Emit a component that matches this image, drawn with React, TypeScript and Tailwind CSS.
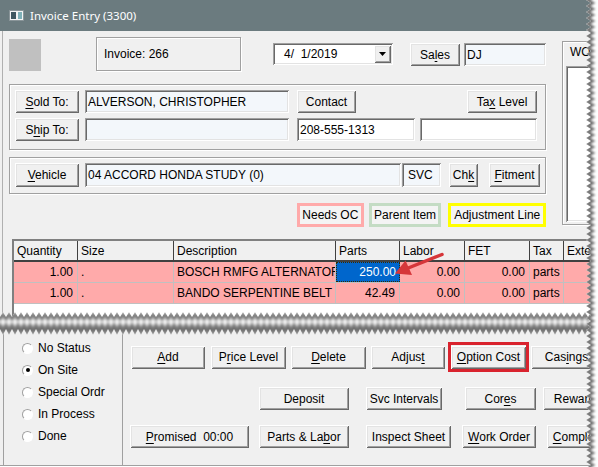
import React from "react";

const RAISED =
  "bg-[#f0f0f0] shadow-[inset_1px_1px_0_#ffffff,inset_-1px_-1px_0_#696969,inset_2px_2px_0_#e3e3e3,inset_-2px_-2px_0_#a0a0a0]";
const SUNKEN =
  "shadow-[inset_1px_1px_0_#a0a0a0,inset_-1px_-1px_0_#ffffff,inset_2px_2px_0_#696969,inset_-2px_-2px_0_#e3e3e3]";
const ETCHED = "border border-[#a0a0a0] shadow-[1px_1px_0_#ffffff,inset_1px_1px_0_#ffffff]";

function U({ c }: { c: string }) {
  return <span className="underline underline-offset-2 decoration-1">{c}</span>;
}

function Btn({ className = "", children }: { className?: string; children: React.ReactNode }) {
  return (
    <div className={`${RAISED} shrink-0 flex items-center justify-center whitespace-nowrap ${className}`}>
      <span className="whitespace-pre">{children}</span>
    </div>
  );
}

function Field({ className = "", children }: { className?: string; children?: React.ReactNode }) {
  return (
    <div className={`${SUNKEN} shrink-0 flex items-center whitespace-nowrap overflow-hidden ${className}`}>
      {children}
    </div>
  );
}

function Radio({ label, checked }: { label: string; checked?: boolean }) {
  return (
    <div className="flex items-center h-[22px]">
      <span className="w-[11px] h-[11px] rounded-full bg-white border border-t-[#a0a0a0] border-l-[#a0a0a0] border-b-[#ffffff] border-r-[#ffffff] flex items-center justify-center">
        {checked && <span className="w-[4px] h-[4px] rounded-full bg-black" />}
      </span>
      <span className="ml-[5px]">{label}</span>
    </div>
  );
}

const COLS = "grid grid-cols-[64px_96px_162px_64px_65px_65px_34px_60px]";

type Line = { qty: string; size: string; desc: string; parts: string; labor: string; fet: string; tax: string };

const LINES: Line[] = [
  { qty: "1.00", size: ".", desc: "BOSCH RMFG ALTERNATOR", parts: "250.00", labor: "0.00", fet: "0.00", tax: "parts" },
  { qty: "1.00", size: ".", desc: "BANDO SERPENTINE BELT", parts: "42.49", labor: "0.00", fet: "0.00", tax: "parts" },
];

function Grid() {
  const head = ["Quantity", "Size", "Description", "Parts", "Labor", "FET", "Tax", "Extended"];
  const cell = "h-[21px] flex items-center border-r border-b border-[#c0c0c0] bg-[#ffaaaa] overflow-hidden whitespace-nowrap";
  return (
    <div className="ml-[12px] mt-[12px] w-[600px] flex-1 bg-white border-t-2 border-l-2 border-[#808080]">
      <div className={`${COLS} h-[21px] border-b-2 border-[#404040] bg-[#f0f0f0]`}>
        {head.map((h) => (
          <div key={h} className="flex items-center pl-[3px] border-r border-[#404040] overflow-hidden whitespace-nowrap">
            {h}
          </div>
        ))}
      </div>
      {LINES.map((l, i) => (
        <div key={i} className={COLS}>
          <div className={`${cell} justify-end pr-[4px]`}>{l.qty}</div>
          <div className={`${cell} pl-[3px]`}>{l.size}</div>
          <div className={`${cell} pl-[3px]`}>{l.desc}</div>
          {i === 0 ? (
            <div className="h-[21px] flex items-center justify-end border-b border-[#c0c0c0] bg-[#ffaaaa]">
              <div className="w-full h-full flex items-center justify-end pr-[3px] bg-[#0066cc] text-white border border-dotted border-[#3a2a00]">
                {l.parts}
              </div>
            </div>
          ) : (
            <div className={`${cell} justify-end pr-[4px]`}>{l.parts}</div>
          )}
          <div className={`${cell} justify-end pr-[4px]`}>{l.labor}</div>
          <div className={`${cell} justify-end pr-[4px]`}>{l.fet}</div>
          <div className={`${cell} pl-[3px]`}>{l.tax}</div>
          <div className={cell} />
        </div>
      ))}
    </div>
  );
}

function zig(from: number, to: number, a: number, b: number, horizontal: boolean) {
  const pts: string[] = [];
  for (let i = 0, v = from; v <= to; i++, v += 3) {
    const w = i % 2 ? a : b;
    pts.push(horizontal ? `${v},${w}` : `${w},${v}`);
  }
  return pts;
}

function Tear() {
  const top = zig(-6, 606, 6, 11, true);
  const bot = zig(-6, 606, 29, 23, true);
  const band = [...top, ...[...bot].reverse()].join(" ");
  return (
    <svg className="absolute left-0 top-[306px] pointer-events-none" width="598" height="34" viewBox="0 0 598 34">
      <defs>
        <clipPath id="bandClip">
          <polygon points={band} />
        </clipPath>
        <filter id="bandBlur" x="-5%" y="-100%" width="110%" height="300%">
          <feGaussianBlur stdDeviation="1.6" />
        </filter>
      </defs>
      <polygon points={band} fill="#ffffff" />
      <g clipPath="url(#bandClip)">
        <polyline points={top.join(" ")} transform="translate(0,2)" fill="none" stroke="#6e6e6e" strokeWidth="3" filter="url(#bandBlur)" />
        <polyline points={bot.join(" ")} transform="translate(0,-3)" fill="none" stroke="#6e6e6e" strokeWidth="4" filter="url(#bandBlur)" />
      </g>
    </svg>
  );
}

function RightEdge() {
  const edge = zig(-6, 474, 7, 2, false);
  const poly = [...edge, "14,474", "14,-6"].join(" ");
  return (
    <svg className="absolute right-0 top-0 pointer-events-none" width="14" height="467" viewBox="0 0 14 467">
      <defs>
        <clipPath id="edgeClip">
          <polygon points={poly} />
        </clipPath>
        <filter id="edgeBlur" x="-100%" y="-5%" width="300%" height="110%">
          <feGaussianBlur stdDeviation="1.3" />
        </filter>
      </defs>
      <polygon points={poly} fill="#ffffff" />
      <g clipPath="url(#edgeClip)">
        <polyline points={edge.join(" ")} transform="translate(1.5,0)" fill="none" stroke="#6e6e6e" strokeWidth="3" filter="url(#edgeBlur)" />
      </g>
    </svg>
  );
}

function Arrow() {
  return (
    <svg className="absolute left-0 top-0 pointer-events-none" width="598" height="467" viewBox="0 0 598 467">
      <line x1="442" y1="254.5" x2="407" y2="268.5" stroke="#d6363a" strokeWidth="3.5" strokeLinecap="round" />
      <polygon points="395,273.5 405.5,260.5 412,275" fill="#d6363a" />
    </svg>
  );
}

export default function App() {
  return (
    <div className="relative w-[598px] h-[467px] overflow-hidden bg-white text-[12px] leading-none text-black font-['Liberation_Sans',Arial,sans-serif]">
      <div className="w-[598px] flex flex-col">
        {/* title bar */}
        <div className="h-[31px] bg-[#6b7b7f] flex items-center pl-[9px]">
          <svg width="15" height="11" viewBox="0 0 15 11">
            <rect x="0.5" y="0.5" width="14" height="10" fill="#f4f4f4" stroke="#8a9599" />
            <rect x="2" y="2" width="5" height="7" fill="#3f5660" />
            <rect x="9" y="2" width="4" height="7" fill="#7fb0b8" />
          </svg>
          <span className="ml-[6px] text-white text-[11.5px] font-['Noto_Sans',sans-serif]">Invoice Entry (3300)</span>
        </div>

        {/* upper part */}
        <div className="h-[287px] bg-[#f0f0f0] overflow-hidden flex flex-col shadow-[inset_2px_0_0_#f0f0f0,inset_3px_0_0_#b0b0b0]">
          <div className="flex h-[196px] shrink-0">
            <div className="w-[546px] shrink-0 pl-[9px] pt-[6px] flex flex-col">
              <div className="flex items-start h-[34px]">
                <div className="w-[32px] h-[32px] mt-[2px] bg-[#c0c0c0]" />
                <div className={`${ETCHED} ml-[55px] w-[145px] h-[34px] flex items-center pl-[7px]`}>Invoice: 266</div>
                <Field className="ml-[32px] mt-[6px] w-[120px] h-[22px] bg-white">
                  <span className="pl-[11px] whitespace-pre">4/  1/2019</span>
                  <div className={`${RAISED} ml-auto mr-[2px] w-[17px] h-[18px] flex items-center justify-center`}>
                    <svg width="7" height="4" viewBox="0 0 7 4">
                      <polygon points="0,0 7,0 3.5,4" fill="#000" />
                    </svg>
                  </div>
                </Field>
                <Btn className="ml-[17px] mt-[6px] w-[50px] h-[23px]">
                  Sa<U c="l" />es
                </Btn>
                <Field className="ml-[4px] mt-[6px] w-[82px] h-[23px] bg-[#f3f7fb] pl-[3px]">DJ</Field>
              </div>

              <div className={`${ETCHED} mt-[13px] w-[537px] h-[66px] pt-[5px] pl-[5px] flex flex-col`}>
                <div className="flex h-[23px]">
                  <Btn className="w-[64px] h-[23px]">
                    <U c="S" />old To:
                  </Btn>
                  <Field className="ml-[6px] w-[204px] h-[23px] bg-[#f3f7fb] pl-[3px]">ALVERSON, CHRISTOPHER</Field>
                  <Btn className="ml-[8px] w-[59px] h-[23px]">Contact</Btn>
                  <Btn className="ml-[111px] w-[70px] h-[23px]">
                    Ta<U c="x" /> Level
                  </Btn>
                </div>
                <div className="flex h-[23px] mt-[5px]">
                  <Btn className="w-[64px] h-[23px]">
                    S<U c="h" />ip To:
                  </Btn>
                  <Field className="ml-[6px] w-[204px] h-[23px] bg-[#f3f7fb]" />
                  <Field className="ml-[8px] w-[118px] h-[23px] bg-white pl-[3px]">208-555-1313</Field>
                  <Field className="ml-[5px] w-[117px] h-[23px] bg-white" />
                </div>
              </div>

              <div className={`${ETCHED} mt-[7px] w-[537px] h-[37px] pt-[5px] pl-[5px] flex`}>
                <Btn className="w-[64px] h-[24px]">
                  <U c="V" />ehicle
                </Btn>
                <Field className="ml-[6px] w-[316px] h-[24px] bg-[#f3f7fb] pl-[3px]">04 ACCORD HONDA STUDY (0)</Field>
                <Field className="ml-[1px] w-[39px] h-[24px] bg-[#f3f7fb] pl-[6px]">SVC</Field>
                <Btn className="ml-[8px] w-[29px] h-[24px]">
                  Ch<U c="k" />
                </Btn>
                <Btn className="ml-[11px] w-[51px] h-[24px]">
                  <U c="F" />itment
                </Btn>
              </div>

              <div className="flex mt-[9px] ml-[288px]">
                <div className="w-[67px] h-[24px] border-[3px] border-[#ffaaaa] bg-[#f4f4f4] flex items-center justify-center">Needs OC</div>
                <div className="ml-[5px] w-[73px] h-[24px] border-[3px] border-[#c4dcc4] bg-[#f4f4f4] flex items-center justify-center">Parent Item</div>
                <div className="ml-[7px] w-[98px] h-[24px] border-[3px] border-[#ffff00] bg-[#f4f4f4] flex items-center justify-center">Adjustment Line</div>
              </div>
            </div>

            <div className={`${ETCHED} ml-[16px] mt-[10px] w-[60px] h-[184px] shrink-0 flex flex-col`}>
              <div className="pl-[7px] pt-[4px] h-[24px]">WO</div>
              <div className={`${SUNKEN} ml-[3px] w-[60px] h-[156px] bg-white`} />
            </div>
          </div>

          <Grid />
        </div>

        {/* gap of the torn break */}
        <div className="h-[10px] bg-white" />

        {/* lower part */}
        <div className="h-[138px] bg-[#f0f0f0] pl-[3px] flex border-b border-[#a0a0a0]">
          <div className="w-[120px] shrink-0 border-l border-r border-[#a0a0a0] pl-[18px] pt-[9px] flex flex-col">
            <Radio label="No Status" />
            <Radio label="On Site" checked />
            <Radio label="Special Ordr" />
            <Radio label="In Process" />
            <Radio label="Done" />
          </div>

          <div className="flex flex-col pt-[14px] gap-[15px]">
            <div className="flex items-center h-[30px]">
              <Btn className="ml-[8px] w-[74px] h-[23px]">
                <U c="A" />dd
              </Btn>
              <Btn className="ml-[6px] w-[75px] h-[23px]">
                P<U c="r" />ice Level
              </Btn>
              <Btn className="ml-[5px] w-[75px] h-[23px]">
                <U c="D" />elete
              </Btn>
              <Btn className="ml-[5px] w-[74px] h-[23px]">
                Adjus<U c="t" />
              </Btn>
              <div className="ml-[3px] w-[81px] h-[30px] border-[3px] border-[#d9232e] flex items-center shrink-0">
                <Btn className="w-[75px] h-[23px]">
                  <U c="O" />ption Cost
                </Btn>
              </div>
              <Btn className="ml-[2px] w-[71px] h-[23px]">
                Cas<U c="i" />ngs
              </Btn>
            </div>

            <div className="flex h-[23px]">
              <Btn className="ml-[136px] w-[90px] h-[23px]">Deposit</Btn>
              <Btn className="ml-[17px] w-[76px] h-[23px]">Svc Intervals</Btn>
              <Btn className="ml-[23px] w-[71px] h-[23px]">
                Cor<U c="e" />s
              </Btn>
              <Btn className="ml-[7px] w-[69px] h-[23px]">Rewards</Btn>
            </div>

            <div className="flex h-[23px]">
              <Btn className="ml-[7px] w-[119px] h-[23px]">
                <U c="P" />romised  00:00
              </Btn>
              <Btn className="ml-[10px] w-[90px] h-[23px]">
                Parts &amp; La<U c="b" />or
              </Btn>
              <Btn className="ml-[17px] w-[85px] h-[23px]">Inspect Sheet</Btn>
              <Btn className="ml-[11px] w-[74px] h-[23px]">
                <U c="W" />ork Order
              </Btn>
              <Btn className="ml-[11px] w-[63px] h-[23px]">
                <U c="C" />omplete
              </Btn>
            </div>
          </div>
        </div>
      </div>

      <Tear />
      <RightEdge />
      <Arrow />
    </div>
  );
}
